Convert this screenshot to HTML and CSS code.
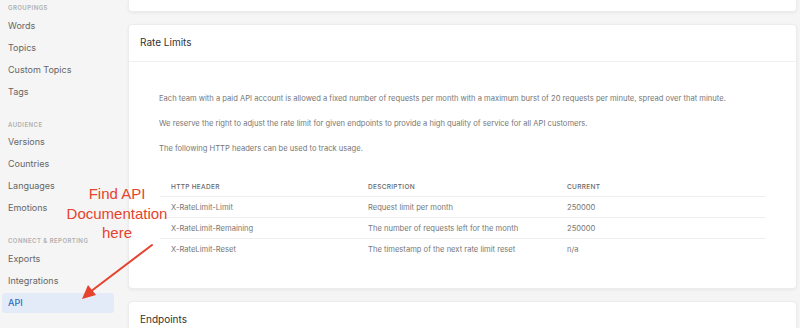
FILE: index.html
```html
<!DOCTYPE html>
<html>
<head>
    <meta charset="UTF-8">
    <title>API - Rate Limits</title>
    <link rel="stylesheet" href="styles.css">
</head>
<body>
    <div class="layout">
        <div class="sidebar">
            <div class="group-title">Groupings</div>
            <div class="nav-item">Words</div>
            <div class="nav-item">Topics</div>
            <div class="nav-item">Custom Topics</div>
            <div class="nav-item">Tags</div>

            <div class="group-title">Audience</div>
            <div class="nav-item">Versions</div>
            <div class="nav-item">Countries</div>
            <div class="nav-item">Languages</div>
            <div class="nav-item">Emotions</div>

            <div class="group-title">Connect &amp; Reporting</div>
            <div class="nav-item">Exports</div>
            <div class="nav-item">Integrations</div>
            <div class="nav-item active">API</div>
        </div>

        <div class="main">
            <div class="card card-cut"></div>

            <div class="card">
                <div class="card-header">Rate Limits</div>
                <div class="card-body">
                    <p>Each team with a paid API account is allowed a fixed number of requests per month with a maximum burst of 20 requests per minute, spread over that minute.</p>
                    <p>We reserve the right to adjust the rate limit for given endpoints to provide a high quality of service for all API customers.</p>
                    <p>The following HTTP headers can be used to track usage.</p>

                    <table class="limits">
                        <thead>
                            <tr>
                                <th class="col-header">HTTP Header</th>
                                <th class="col-desc">Description</th>
                                <th>Current</th>
                            </tr>
                        </thead>
                        <tbody>
                            <tr>
                                <td>X-RateLimit-Limit</td>
                                <td>Request limit per month</td>
                                <td>250000</td>
                            </tr>
                            <tr>
                                <td>X-RateLimit-Remaining</td>
                                <td>The number of requests left for the month</td>
                                <td>250000</td>
                            </tr>
                            <tr>
                                <td>X-RateLimit-Reset</td>
                                <td>The timestamp of the next rate limit reset</td>
                                <td>n/a</td>
                            </tr>
                        </tbody>
                    </table>
                </div>
            </div>

            <div class="card">
                <div class="card-header">Endpoints</div>
            </div>
        </div>
    </div>

    <!-- screenshot annotation -->
    <div class="callout">Find API<br>Documentation<br>here</div>
    <svg class="callout-arrow" width="90" height="70" viewBox="0 0 90 70">
        <line x1="78" y1="5" x2="16" y2="52" stroke="#e5432d" stroke-width="2" stroke-linecap="round"/>
        <polygon points="8,59 14,45 22,55" fill="#e5432d"/>
    </svg>
</body>
</html>
```

FILE: styles.css
```css
body {
    margin: 0;
    background: #f5f5f5;
    font-family: Inter, "Liberation Sans", sans-serif;
    color: #555;
    overflow: hidden;
}
.layout {
    display: flex;
    height: 328px;
}
.sidebar {
    width: 118px;
    flex-shrink: 0;
    padding: 3px 4px 0 2px;
    box-sizing: border-box;
}
.group-title {
    font-size: 6px;
    font-weight: 600;
    letter-spacing: 0.45px;
    text-transform: uppercase;
    color: #b0b0b0;
    padding: 0 6px;
    height: 9px;
    line-height: 9px;
    margin-bottom: 3.5px;
}
.group-title ~ .group-title {
    margin-top: 18px;
}
.nav-item {
    font-size: 9px;
    color: #666;
    padding: 0 6px;
    height: 20px;
    line-height: 20px;
    margin-bottom: 2px;
    border-radius: 3px;
}
.nav-item.active {
    background: #e2ebf7;
    color: #2f6bc0;
    font-weight: 500;
}
.main {
    flex: 1;
    padding: 0 5px 0 10px;
    display: flex;
    flex-direction: column;
    gap: 12px;
}
.card {
    background: #fff;
    border: 1px solid #ececec;
    border-radius: 4px;
    box-shadow: 0 1px 3px rgba(0,0,0,0.06);
    flex-shrink: 0;
}
.card-cut {
    height: 11px;
    border-top: none;
    border-radius: 0 0 4px 4px;
}
.card-header {
    height: 36px;
    line-height: 35px;
    padding: 0 11px;
    font-size: 10px;
    color: #333;
    border-bottom: 1px solid #f0f0f0;
}
.card-body {
    padding: 31px 30px 29px 30px;
}
.card-body p {
    margin: 0 0 13px;
    font-size: 7.6px;
    line-height: 12px;
    color: #777;
}
.limits {
    width: 606px;
    border-collapse: collapse;
    margin-top: 23px;
    margin-left: 1px;
    font-size: 7.6px;
}
.limits th {
    text-align: left;
    font-size: 6.5px;
    font-weight: 500;
    letter-spacing: 0.3px;
    text-transform: uppercase;
    color: #666;
    height: 18px;
    padding: 0 11px;
    border-bottom: 1px solid #efefef;
}
.limits td {
    color: #777;
    height: 20px;
    padding: 0 11px;
    border-bottom: 1px solid #efefef;
}
.limits tbody tr:last-child td {
    border-bottom: none;
}
.col-header {
    width: 175px;
}
.col-desc {
    width: 177px;
}
.callout {
    position: absolute;
    left: 57px;
    top: 184px;
    width: 120px;
    text-align: center;
    font-family: "Liberation Sans", Arial, sans-serif;
    font-size: 15px;
    line-height: 19.5px;
    color: #e5432d;
}
.callout-arrow {
    position: absolute;
    left: 74px;
    top: 240px;
}
```
